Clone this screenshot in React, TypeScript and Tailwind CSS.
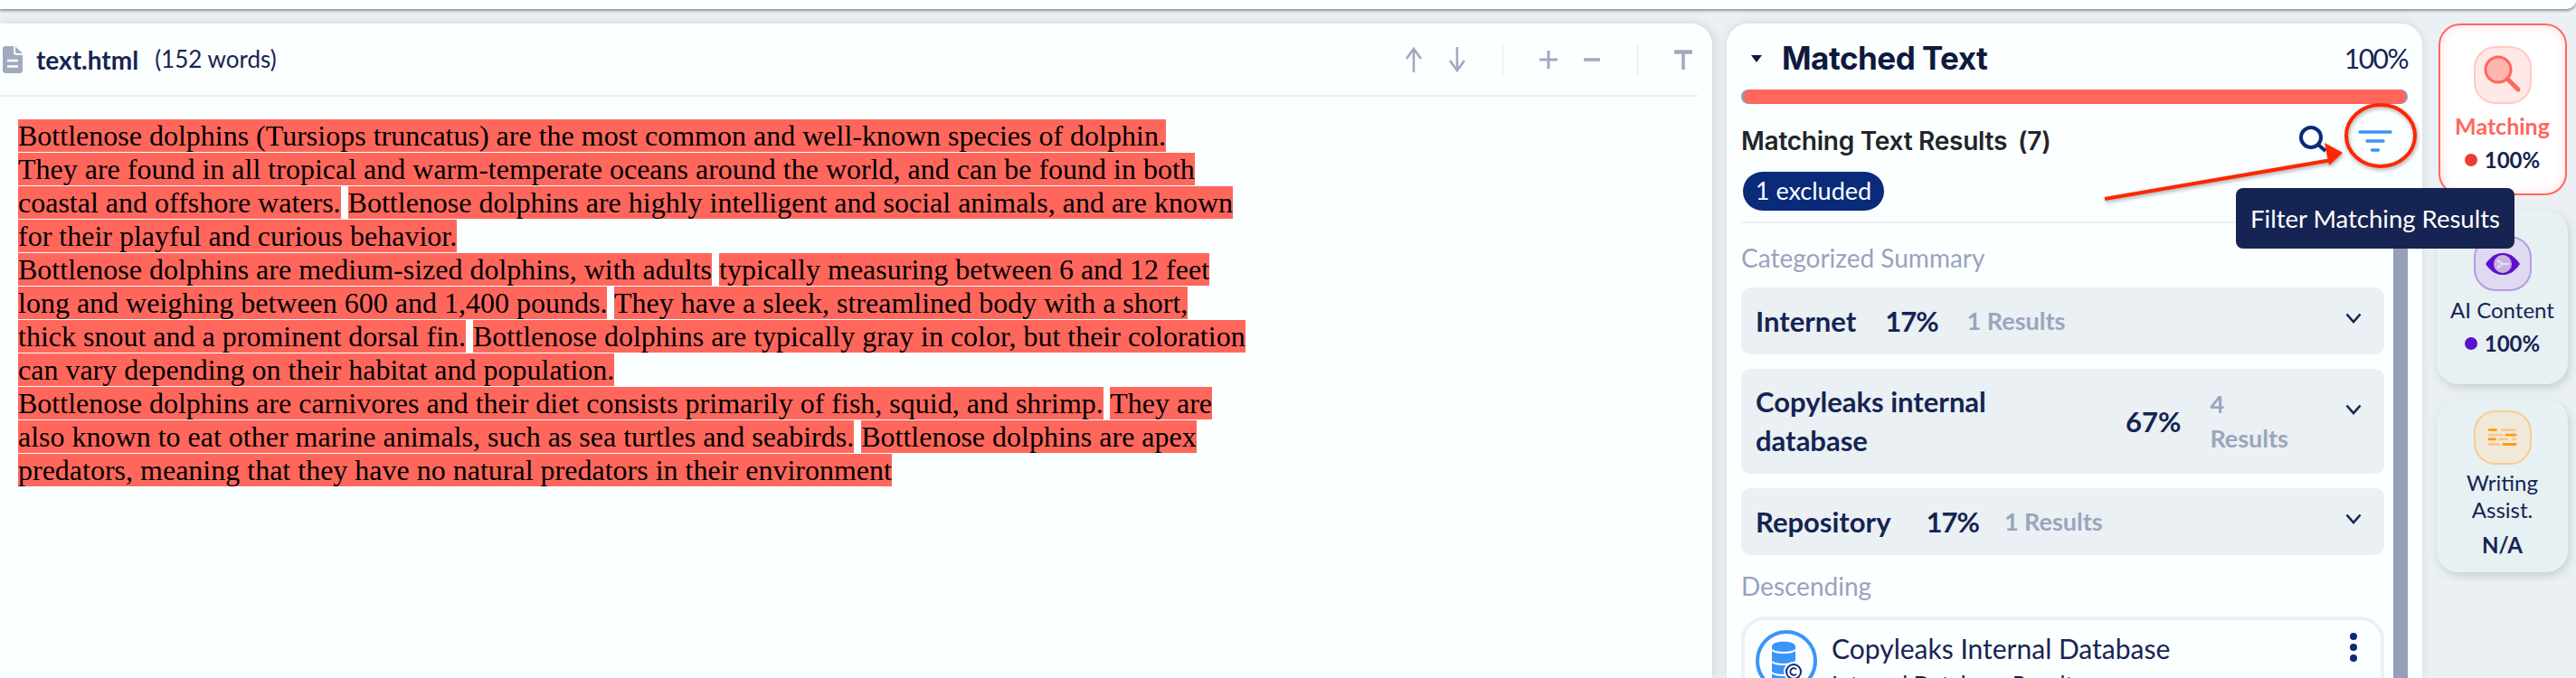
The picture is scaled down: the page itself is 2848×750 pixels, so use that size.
import type { ReactNode } from "react";

const Hl = ({ children }: { children: ReactNode }) => <span className="bg-[#ff675d]">{children}</span>;

const Chevron = () => (
  <svg width="18" height="12" viewBox="0 0 18 12" fill="none" className="shrink-0">
    <path d="M1.5 1.5 9 10l7.500-8.500" stroke="#152452" strokeWidth="2.6" />
  </svg>
);

const SummaryRow = ({ children, tall }: { children: ReactNode; tall?: boolean }) => (
  <div className={`flex items-center rounded-[10px] bg-[#eaf0f3] pl-4 pr-[25px] ${tall ? "h-[116px]" : "h-[74px]"}`}>
    {children}
  </div>
);

const Dot = ({ color }: { color: string }) => <span className={`size-[14px] rounded-full ${color}`} />;

const FileIcon = () => (
  <svg width="22" height="30" viewBox="0 0 22 30" className="shrink-0">
    <path d="M3 0h9v7a3 3 0 0 0 3 3h7v17a3 3 0 0 1-3 3H3a3 3 0 0 1-3-3V3a3 3 0 0 1 3-3Z" fill="#a0aac0" />
    <path d="M14 0.500 22 8h-6.500a1.500 1.500 0 0 1-1.500-1.500Z" fill="#a0aac0" />
    <path d="M5 16h12M5 22.500h12" stroke="#fcffff" strokeWidth="2.500" />
  </svg>
);

const Toolbar = () => (
  <div className="flex items-center">
    <svg width="20" height="30" viewBox="0 0 20 30" fill="none" stroke="#a0aac0" strokeWidth="2.6" className="mr-[28px]">
      <path d="M10 29V3M2 14l8-11 8 11" />
    </svg>
    <svg width="20" height="30" viewBox="0 0 20 30" fill="none" stroke="#a0aac0" strokeWidth="2.6" className="mr-[40px]">
      <path d="M10 1v26M2 16l8 11 8-11" />
    </svg>
    <span className="mr-[40px] h-[34px] w-[1px] bg-[#e3e8ee]" />
    <svg width="20" height="20" viewBox="0 0 20 20" stroke="#a0aac0" strokeWidth="3" className="mr-[28px]">
      <path d="M10 0v20M0 10h20" />
    </svg>
    <svg width="20" height="20" viewBox="0 0 20 20" stroke="#a0aac0" strokeWidth="3.500" className="mr-[40px]">
      <path d="M1 10h18" />
    </svg>
    <span className="mr-[40px] h-[34px] w-[1px] bg-[#e3e8ee]" />
    <svg width="20" height="22" viewBox="0 0 20 22" className="mr-[6px]">
      <path d="M1 2.500h18" stroke="#a0aac0" strokeWidth="4.500" strokeLinecap="round" />
      <path d="M10 3v19" stroke="#a0aac0" strokeWidth="3.500" />
    </svg>
  </div>
);

const DatabaseIcon = () => (
  <svg width="68" height="68" viewBox="0 0 68 68" fill="none" className="shrink-0">
    <circle cx="34" cy="34" r="32" stroke="#3b95f8" strokeWidth="4" />
    <path d="M18 18c0-7 26-7 26 0v38c0 6-26 6-26 0Z" fill="#3b95f8" />
    <path d="M18 22c5 4 21 4 26 0M18 35c5 4 21 4 26 0M18 47c5 4 21 4 26 0" stroke="#fcffff" strokeWidth="2" />
    <circle cx="42" cy="46" r="11" fill="#fcffff" />
    <circle cx="42" cy="46" r="8" stroke="#0a2a7a" strokeWidth="2" />
    <path d="M45 43.500a3.800 3.800 0 1 0 0 5" stroke="#0a2a7a" strokeWidth="1.800" />
  </svg>
);

const Annotations = () => (
  <svg className="pointer-events-none absolute left-[2310px] top-[105px] drop-shadow-[1px_2px_2px_rgba(0,0,0,0.35)]" width="370" height="130" viewBox="0 0 370 130" fill="none">
    <path d="M17 115 268 72" stroke="#ff2600" strokeWidth="4" />
    <path d="M280 64 260 53 265 78Z" fill="#ff2600" />
    <ellipse cx="322" cy="45" rx="38" ry="34" stroke="#ff2600" strokeWidth="4" />
  </svg>
);

const App = () => {
  return (
    <div className="relative flex h-[750px] w-[2848px] flex-col overflow-hidden bg-[#eaf0f3] font-['Lato',sans-serif] text-[#152452]">
      <div className="h-[10px] shrink-0 rounded-br-[14px] bg-[#fcffff] shadow-[0_2px_3px_rgba(60,70,80,0.55)]" />

      <div className="flex min-h-0 flex-1 pt-4">
        {/* document */}
        <div className="w-[1893px] shrink-0 rounded-tr-[24px] bg-[#fcffff] pr-4 shadow-[3px_0_10px_rgba(120,135,150,0.22)]">
          <div className="flex h-[81px] items-center justify-between border-b-2 border-[#eaf0f3] pl-[3px]">
            <div className="flex items-center">
              <FileIcon />
              <span className="ml-[15px] text-[28px] font-bold">text.html</span>
              <span className="ml-[18px] text-[26px]">(152 words)</span>
            </div>
            <Toolbar />
          </div>
          <div className="pl-5 pt-[25px] font-['Liberation_Serif',serif] text-[32px] leading-[37px] text-black">
            <Hl>Bottlenose dolphins (Tursiops truncatus) are the most common and well-known species of dolphin.</Hl>
            <br />
            <Hl>They are found in all tropical and warm-temperate oceans around the world, and can be found in both</Hl>
            <br />
            <Hl>coastal and offshore waters.</Hl> <Hl>Bottlenose dolphins are highly intelligent and social animals, and are known</Hl>
            <br />
            <Hl>for their playful and curious behavior.</Hl>
            <br />
            <Hl>Bottlenose dolphins are medium-sized dolphins, with adults</Hl> <Hl>typically measuring between 6 and 12 feet</Hl>
            <br />
            <Hl>long and weighing between 600 and 1,400 pounds.</Hl> <Hl>They have a sleek, streamlined body with a short,</Hl>
            <br />
            <Hl>thick snout and a prominent dorsal fin.</Hl> <Hl>Bottlenose dolphins are typically gray in color, but their coloration</Hl>
            <br />
            <Hl>can vary depending on their habitat and population.</Hl>
            <br />
            <Hl>Bottlenose dolphins are carnivores and their diet consists primarily of fish, squid, and shrimp.</Hl> <Hl>They are</Hl>
            <br />
            <Hl>also known to eat other marine animals, such as sea turtles and seabirds.</Hl> <Hl>Bottlenose dolphins are apex</Hl>
            <br />
            <Hl>predators, meaning that they have no natural predators in their environment</Hl>
          </div>
        </div>

        {/* results */}
        <div className="ml-4 w-[769px] shrink-0 rounded-t-[24px] bg-[#fcffff] pl-4 pr-4 shadow-[0_0_10px_rgba(120,135,150,0.22)]">
          <div className="flex h-[73px] items-center justify-between pt-[4px]">
            <div className="flex items-center">
              <svg width="12" height="8" viewBox="0 0 12 8" className="ml-[11px]">
                <path d="M0 0h12L6 8Z" fill="#0e1a3e" />
              </svg>
              <span className="ml-[22px] font-['Inter',sans-serif] text-[35px] font-bold tracking-[-0.5px] text-[#0e1a3e]">Matched Text</span>
            </div>
            <span className="text-[30px] tracking-[-1.500px]">100%</span>
          </div>
          <div className="h-4 rounded-full bg-[#8f9bb3] pl-[3px] pr-[2px]">
            <div className="h-full rounded-full bg-[#ff675d]" />
          </div>

          <div className="mt-[21px] flex h-[40px] items-center justify-between">
            <div className="font-['Inter',sans-serif] text-[28px] font-semibold tracking-[-0.25px] text-[#222529]">
              Matching Text Results<span className="ml-3">(7)</span>
            </div>
            <svg width="32" height="34" viewBox="0 0 32 34" fill="none" className="mr-[88px]" stroke="#0a2a7a">
              <circle cx="13" cy="13" r="11" strokeWidth="4" />
              <path d="M21 21l8 7" strokeWidth="4" />
            </svg>
          </div>
          <div className="ml-[2px] mt-[14px] flex h-[43px] w-[156px] items-center justify-center rounded-full bg-[#0a2a7a] text-[27px] text-white">
            1 excluded
          </div>
          <div className="mt-3 h-[2px] w-[737px] bg-[#eaf0f3]" />

          <div className="flex gap-[10px]">
            <div className="w-[711px] shrink-0">
              <div className="mt-[20px] text-[28px] leading-[36px] text-[#98a3bd]">Categorized Summary</div>
              <div className="mt-[15px] flex flex-col gap-4 font-bold">
                <SummaryRow>
                  <span className="text-[31px]">Internet</span>
                  <span className="ml-8 text-[31px] tracking-[-1px]">17%</span>
                  <span className="ml-8 text-[27px] text-[#9aa5bd]">1 Results</span>
                  <span className="ml-auto -mt-[7px]"><Chevron /></span>
                </SummaryRow>
                <SummaryRow tall>
                  <span className="w-[409px] shrink-0 pr-[100px] text-[31px] leading-[43px]">Copyleaks internal database</span>
                  <span className="text-[31px]">67%</span>
                  <span className="ml-[32px] w-[100px] text-[27px] leading-[38px] text-[#9aa5bd]">4 Results</span>
                  <span className="ml-auto -mt-[26px]"><Chevron /></span>
                </SummaryRow>
                <SummaryRow>
                  <span className="text-[31px]">Repository</span>
                  <span className="ml-[39px] text-[31px] tracking-[-1px]">17%</span>
                  <span className="ml-[28px] text-[27px] text-[#9aa5bd]">1 Results</span>
                  <span className="ml-auto -mt-[7px]"><Chevron /></span>
                </SummaryRow>
              </div>
              <div className="mt-4 text-[28px] leading-[36px] text-[#98a3bd]">Descending</div>
              <div className="mt-[16px] h-[110px] rounded-[26px] border-4 border-[#eaf0f3] px-3 pt-[11px]">
                <div className="flex">
                  <DatabaseIcon />
                  <div className="ml-4 flex-1">
                    <div className="flex items-start justify-between">
                      <span className="text-[30px] leading-[40px]">Copyleaks Internal Database</span>
                      <span className="mr-[14px] mt-[3px] flex flex-col gap-[4px]">
                        <span className="size-2 rounded-full bg-[#0a2a7a]" />
                        <span className="size-2 rounded-full bg-[#0a2a7a]" />
                        <span className="size-2 rounded-full bg-[#0a2a7a]" />
                      </span>
                    </div>
                    <div className="mt-[2px] text-[25px] leading-[34px]">Internal Database Result</div>
                  </div>
                </div>
              </div>
            </div>
            <div className="mt-[3px] h-[600px] w-4 bg-[#959fb6]" />
          </div>
        </div>

        {/* side tabs */}
        <div className="ml-[16px] flex w-[145px] shrink-0 flex-col items-center gap-4 text-center">
          <div className="flex h-[190px] w-[142px] flex-col items-center rounded-[24px] border-2 border-[#ff675d] bg-[#fff] pt-[23px] shadow-[inset_0_0_14px_rgba(255,103,93,0.18)]">
            <div className="flex size-16 items-center justify-center rounded-[24px] border-2 border-[#ffc9c4] bg-[#ffe9e7]">
              <svg width="44" height="44" viewBox="0 0 44 44" fill="none">
                <circle cx="17" cy="16" r="14" stroke="#ff675d" strokeWidth="3" fill="#ffb5b0" />
                <path d="M28 27l11 11" stroke="#ff675d" strokeWidth="5" strokeLinecap="round" />
              </svg>
            </div>
            <div className="mt-[6px] text-[25px] font-bold leading-[36px] text-[#ff675d]">Matching</div>
            <div className="mt-[4px] flex items-center gap-2 text-[24px] font-bold leading-[32px]"><Dot color="bg-[#ef3b33]" />100%</div>
          </div>

          <div className="flex h-[193px] w-[145px] flex-col items-center rounded-[24px] bg-[#e7f0f3] pt-[29px] shadow-[2px_4px_8px_rgba(120,135,150,0.3)]">
            <div className="flex h-[61px] w-16 items-center justify-center rounded-[24px] border-2 border-[#b79be0] bg-[#dfd9f1]">
              <svg width="40" height="26" viewBox="0 0 40 26">
                <path d="M1 13C8 3 14 1 20 1s12 2 19 12C32 23 26 25 20 25S8 23 1 13Z" fill="#5b13c8" />
                <circle cx="20" cy="13" r="10" fill="#c9b2e2" />
                <path d="M14 9l6 4-6 4M20 13h7" stroke="#e9e2f3" strokeWidth="2" fill="none" />
              </svg>
            </div>
            <div className="mt-[3px] text-[24px] leading-[36px]">AI Content</div>
            <div className="mt-[3px] flex items-center gap-2 text-[24px] font-bold leading-[32px]"><Dot color="bg-[#5b13c8]" />100%</div>
          </div>

          <div className="flex h-[192px] w-[145px] flex-col items-center rounded-[24px] bg-[#e7f0f3] pt-[13px] shadow-[2px_4px_8px_rgba(120,135,150,0.3)]">
            <div className="flex h-[60px] w-16 items-center justify-center rounded-[24px] border-2 border-[#f6cd93] bg-[#f0e9da]">
              <svg width="64" height="60" viewBox="0 0 64 60" fill="none" strokeWidth="3" strokeLinecap="round">
                <path d="M16 21h8M36 27h11M16 32h7M33 38h14" stroke="#ff9a12" />
                <path d="M31 21h16M16 27h15M28 32h9M44 32h3M16 38h11" stroke="#fcc88c" />
              </svg>
            </div>
            <div className="mt-[5px] text-[24px] leading-[30px]">Writing<br />Assist.</div>
            <div className="mt-[8px] text-[24px] font-bold leading-[32px]">N/A</div>
          </div>
        </div>
      </div>

      {/* filter button + screenshot callout */}
      <svg width="38" height="26" viewBox="0 0 38 26" className="absolute left-[2607px] top-[144px]" stroke="#3b95f8" strokeWidth="3.500" strokeLinecap="round">
        <path d="M2 2h34M10 12h18M15.500 22h7" />
      </svg>
      <Annotations />
      <div className="absolute left-[2472px] top-[208px] flex h-[67px] w-[308px] items-center justify-center rounded-[8px] bg-[#152452] text-[27.500px] text-white">
        Filter Matching Results
      </div>
    </div>
  );
};

export default App;
